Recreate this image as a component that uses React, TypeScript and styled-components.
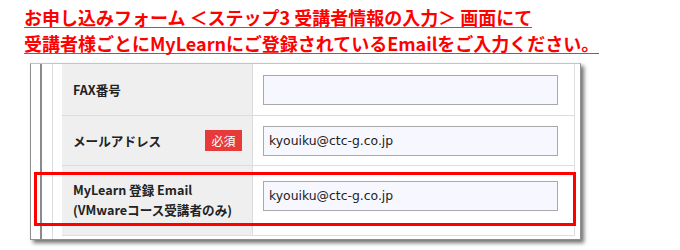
import * as React from 'react';
import styled, { createGlobalStyle } from 'styled-components';

const Global = createGlobalStyle`
  html, body {
    margin: 0;
    padding: 0;
    background: #ffffff;
  }
  body {
    font-family: "Noto Sans CJK JP", "Noto Sans", sans-serif;
  }
`;

const Page = styled.div`
  width: 680px;
  height: 250px;
  overflow: hidden;
  padding-top: 2px;
  box-sizing: border-box;
`;

const Heading = styled.div`
  padding-left: 24px;
`;

const HeadLine = styled.div`
  width: fit-content;
  padding-top: 5px;
  line-height: 20px;
  font-size: 18px;
  font-weight: 700;
  color: #ff0000;
  border-bottom: 1px solid #ff2a2a;
  white-space: nowrap;
`;

const Shot = styled.div`
  position: relative;
  margin: 9px 0 0 30px;
  width: 551px;
  height: 177px;
  box-sizing: border-box;
  border: 1px solid #8f8f8f;
  border-top-color: #c4c4c4;
  box-shadow: 3px 3px 4px rgba(0, 0, 0, 0.55);
  background: #ffffff;
  display: flex;
`;

const Panel = styled.div`
  margin-left: 9px;
  border-left: 2px solid #8a8a8a;
  flex: 1;
  display: flex;
`;

const Inner = styled.div`
  margin-left: 10px;
  border-left: 1px solid #dcdcdc;
  padding-left: 9px;
  padding-bottom: 3px;
  flex: 1;
  display: flex;
`;

const Table = styled.div`
  width: 512px;
  border-right: 1px solid #dedede;
  border-bottom: 1px solid #dedede;
  display: flex;
  flex-direction: column;
`;

const Row = styled.div<{ $h: number; $pb?: number }>`
  display: grid;
  grid-template-columns: 190px 1fr;
  height: ${(p) => p.$h}px;
  & + & {
    border-top: 1px solid #dcdcdc;
  }
  & > * {
    padding-bottom: ${(p) => p.$pb ?? 0}px;
  }
`;

const Label = styled.div`
  background: #efefef;
  display: flex;
  align-items: center;
  justify-content: space-between;
  padding: 0 10px 0 11px;
  font-size: 12.6px;
  font-weight: 700;
  line-height: 20px;
  color: #222222;
`;

const Value = styled.div`
  border-left: 1px solid #dcdcdc;
  display: flex;
  align-items: center;
  padding-left: 10px;
`;

const Field = styled.div`
  width: 295px;
  height: 30px;
  box-sizing: border-box;
  border: 1px solid #a9a9a9;
  background: #f7f7ff;
  display: flex;
  align-items: center;
  padding-left: 5px;
  font-family: "DejaVu Sans", sans-serif;
  font-size: 12.4px;
  color: #222222;
`;

const Required = styled.span`
  width: 37px;
  height: 21px;
  background: #e73a3a;
  color: #ffffff;
  font-size: 12px;
  font-weight: 400;
  display: flex;
  align-items: center;
  justify-content: center;
`;

const Highlight = styled.div`
  position: absolute;
  left: 3px;
  top: 108px;
  width: 542px;
  height: 54px;
  box-sizing: border-box;
  border: 3px solid #ff0000;
  pointer-events: none;
`;

export default function App() {
  return (
    <Page>
      <Global />
      <Heading>
        <HeadLine>お申し込みフォーム ＜ステップ3 受講者情報の入力＞ 画面にて</HeadLine>
        <HeadLine>受講者様ごとにMyLearnにご登録されているEmailをご入力ください。</HeadLine>
      </Heading>
      <Shot>
        <Panel>
          <Inner>
            <Table>
              <Row $h={52}>
                <Label>FAX番号</Label>
                <Value>
                  <Field />
                </Value>
              </Row>
              <Row $h={49}>
                <Label>
                  メールアドレス
                  <Required>必須</Required>
                </Label>
                <Value>
                  <Field>kyouiku@ctc-g.co.jp</Field>
                </Value>
              </Row>
              <Row $h={70} $pb={9}>
                <Label>
                  <div>
                    MyLearn 登録 Email
                    <br />
                    (VMwareコース受講者のみ)
                  </div>
                </Label>
                <Value>
                  <Field>kyouiku@ctc-g.co.jp</Field>
                </Value>
              </Row>
            </Table>
          </Inner>
        </Panel>
        <Highlight />
      </Shot>
    </Page>
  );
}
